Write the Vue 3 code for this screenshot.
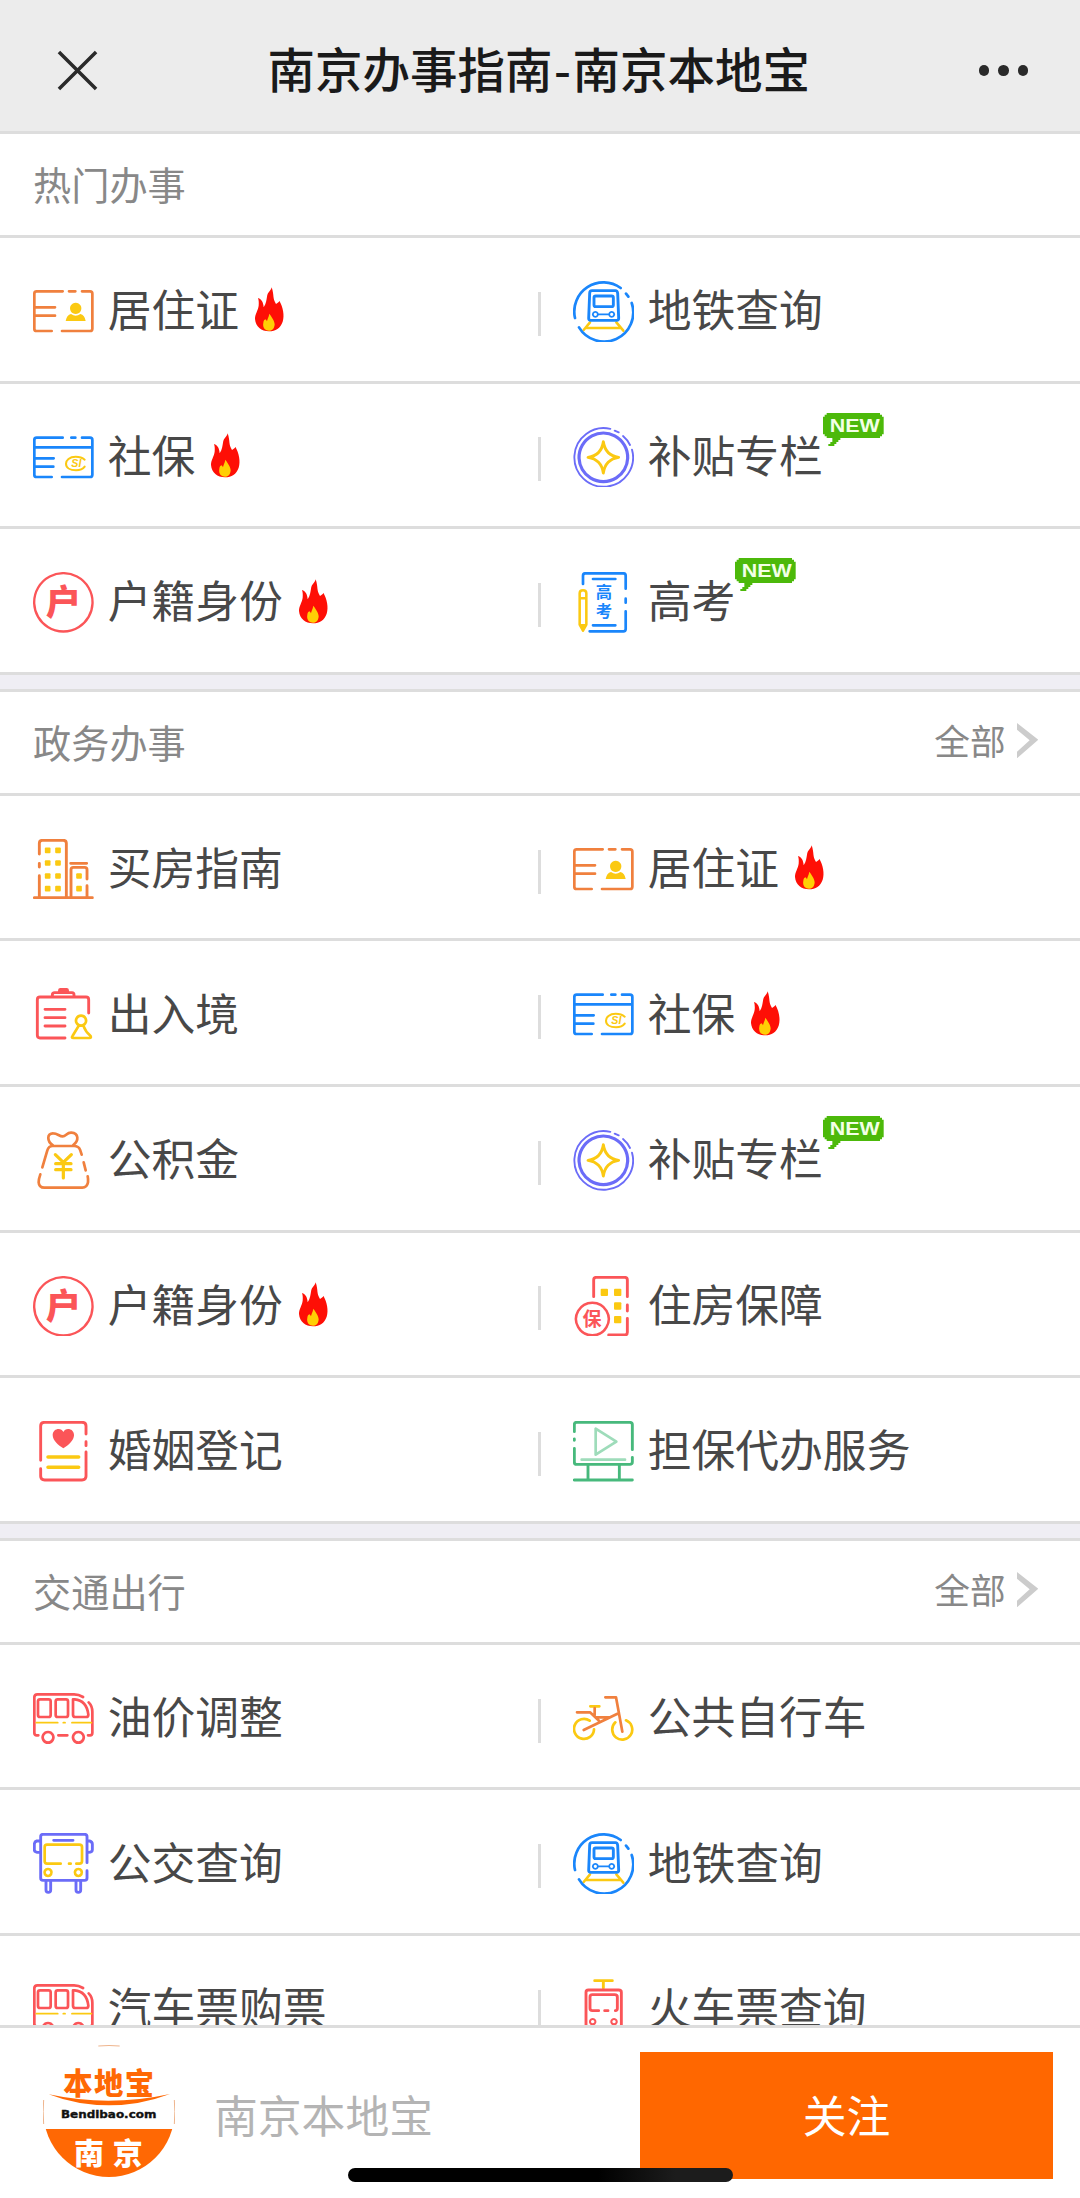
<script setup>
const O = '#f0803e'
const Y = '#fbc912'
const B = '#1a86fb'
const R = '#fb5558'
const P = '#6b6cf8'
const G = '#47b97c'

// Each icon: its own viewBox, stroked paths, filled paths and optional lettering
const icons = {
  permit: {
    box: '99 93 182 182',
    strokes: [
      [O, 7.5, 'M188 124H110Q103 124 103 131V236Q103 243 110 243H155M207 124h19M246 124H270Q277 124 277 131V236Q277 243 270 243H186M107 172H165M107 197H165'],
    ],
    fills: [
      [Y, 'M227 158a17 17 0 1 0 .1 0ZM197 213Q200 195 213 192Q227 202 241 192Q254 195 257 213Z'],
    ],
  },
  social: {
    box: '99 530 182 182',
    strokes: [
      [B, 7.5, 'M188 562H110Q103 562 103 569V673Q103 680 110 680H155M214 562h12M246 562H270Q277 562 277 569V673Q277 680 270 680H186M107 591H277M107 624H161M107 649H160'],
      [Y, 5.5, 'M254 628Q244 619 227 619C208 619 198 630 198 640C198 652 210 660 228 660Q246 660 254 649'],
    ],
    texts: [[Y, 'SI', 229, 650, 32, 'italic 700']],
  },
  hukou: {
    box: '99 966 182 182',
    strokes: [[R, 6.5, 'M190 969.5a87.5 87.5 0 1 0 .1 0Z']],
    texts: [[R, '户', 190, 1096, 106, '900']],
  },
  metro: {
    box: '160 93 182 182',
    strokes: [
      [Y, 7, 'M211 217L192 240M290 217L311 242M200 234H303'],
      [B, 7.5, 'M166 204A87.5 87.5 0 0 1 303 114M319 131L326 140M336 159A87.5 87.5 0 0 1 178 232'],
      [B, 8, 'M217 122H287Q293 122 294 130L297 205Q297 211 291 211H213Q207 211 207 205L210 130Q210 122 217 122ZM228 138H276Q281 138 281 143V165Q281 170 276 170H228Q223 170 223 165V143Q223 138 228 138Z'],
      [B, 5, 'M227 185.500a7.500 7.500 0 1 0 .1 0ZM276 185.500a7.500 7.500 0 1 0 .1 0ZM236 193H267'],
    ],
  },
  subsidy: {
    box: '160 530 182 182',
    strokes: [
      [P, 5, 'M337 598A88 88 0 1 1 272 535.500M285 541L297 546M310 557Q324 569 331 584'],
      [P, 9, 'M251 548a73 73 0 1 0 .1 0Z'],
      [Y, 8, 'M251 574Q257 615 297 621Q257 627 251 668Q245 627 205 621Q245 615 251 574Z'],
    ],
  },
  gaokao: {
    box: '160 966 182 182',
    strokes: [
      [B, 7.5, 'M190 1002V977Q190 970 197 970H311Q318 970 318 977V1016M318 1046V1058M318 1084V1137Q318 1144 311 1144H210M220 987H287M220 1126H287'],
      [Y, 7, 'M180 1030Q180 1021 190 1021Q200 1021 200 1030V1124L190 1142L180 1124ZM180 1045H200'],
    ],
    fills: [[Y, 'M180 1122H200L190 1146Z']],
    texts: [[B, '高', 253, 1043, 49, '700'], [B, '考', 253, 1100, 49, '700']],
  },
  building: {
    box: '99 117 182 182',
    strokes: [
      [O, 8, 'M118 162V130Q118 121 127 121H190Q199 121 199 130V292M118 190V201M118 227V292M103 293H277M212 190H260M213 292V209Q213 202 220 202H254Q261 202 261 209V237M261 257V292'],
    ],
    squares: [Y, 17, [[143, 151], [174, 151], [143, 189], [174, 189], [143, 228], [174, 228], [143, 266], [174, 266], [237, 228], [237, 266]]],
  },
  exit: {
    box: '99 554 182 182',
    strokes: [
      [R, 8, 'M266 641V601Q266 593 258 593H120Q112 593 112 601V708Q112 716 120 716H195M157 592V587Q157 580 164 580H216Q222 580 222 587V592M135 630H195M135 655H195M135 680H195'],
      [Y, 7.5, 'M243 649a15 15 0 1 0 .1 0ZM235 681L218 709Q213 716 220 716H268Q275 716 271 709Q256 696 251 681'],
    ],
    fills: [[R, 'M180 566H201Q207 566 207 574V583H174V574Q174 566 180 566Z']],
  },
  fund: {
    box: '99 991 182 182',
    strokes: [
      [O, 7.5, 'M127 1103L142 1052Q146 1039 158 1039H222Q236 1039 240 1050L245 1065M251 1088L257 1112M263 1130Q265 1140 264 1148Q261 1164 247 1164H133Q117 1164 116 1148Q116 1138 121 1124M159 1037C140 1025 140 1000 160 1001C172 1001 178 1010 188 1010C198 1010 200 998 214 999C236 1001 238 1022 219 1037'],
      [Y, 9, 'M166 1065L190 1088L214 1065M190 1088V1135M167 1092H213M167 1110H213'],
    ],
  },
  housing: {
    box: '100 167 182 182',
    strokes: [
      [R, 8, 'M162 229V179Q162 171 170 171H255Q263 171 263 179V229M263 254V272M263 294V336Q263 344 255 344H207'],
      [R, 7, 'M158 247a49 49 0 1 0 .1 0Z'],
    ],
    squares: [Y, 22, [[194, 216], [234, 216], [234, 257], [234, 298]]],
    texts: [[R, '保', 157, 317, 57, '700']],
  },
  marriage: {
    box: '99 604 182 182',
    strokes: [
      [R, 8, 'M122 722V619Q122 608 134 608H246Q258 608 258 619V643M258 666V678M258 697V770Q258 781 246 781H134Q122 781 122 770V747'],
      [Y, 10, 'M144 712H236M144 743H236'],
    ],
    fills: [[R, 'M190 686C175 676 158 663 158 646C158 626 184 622 190 637C196 622 222 626 222 646C222 663 205 676 190 686Z']],
  },
  agency: {
    box: '100 604 182 182',
    strokes: [
      ['#9edcba', 7.5, 'M168 627V705L230 666ZM126 720H256'],
      [G, 8, 'M104 636V615Q104 608 111 608H270Q278 608 278 615V690M278 713V727Q278 734 270 734H111Q104 734 104 727V686M104 658V662M145 738V778M239 738V778M104 781H278'],
    ],
  },
  coach: {
    box: '99 83 182 182',
    strokes: [
      [R, 7.5, 'M249 110Q236 102 222 102H112Q103 102 103 111V217Q103 225 110 225H115M266 126Q277 137 277 154V217Q277 225 270 225H264M175 225H202M144 215a16 16 0 1 0 .1 0ZM235 215a16 16 0 1 0 .1 0ZM120 117H146Q152 117 152 123V164Q152 170 146 170H120Q114 170 114 164V123Q114 117 120 117ZM173 117H198Q204 117 204 123V164Q204 170 198 170H173Q167 170 167 164V123Q167 117 173 117ZM219 117H224Q260 120 265 163Q265 170 258 170H226Q219 170 219 163Z'],
      [Y, 5, 'M109 187H173M190 187h5M216 187H274'],
    ],
  },
  citybus: {
    box: '99 520 182 182',
    strokes: [
      [P, 8, 'M261 609V531Q261 524 254 524H129Q122 524 122 531V655Q122 662 129 662H254Q261 662 261 655V633M161 542H219M118 544H110Q103 546 103 554V570Q103 578 118 578M265 544H269Q277 546 277 554V570Q277 578 265 578M138 664V691Q138 698 145 698Q152 698 152 691V664M228 664V691Q228 698 235 698Q242 698 242 691V664'],
      [Y, 7.5, 'M182 612H141Q134 612 134 605V562Q134 555 141 555H238Q246 555 246 562V605Q246 612 238 612H229M207 612h5M144 628a10.500 10.500 0 1 0 .1 0ZM235 628a10.500 10.500 0 1 0 .1 0Z'],
    ],
  },
  bike: {
    box: '100 83 182 182',
    strokes: [
      [Y, 7.5, 'M163 207A30 30 0 1 1 150 181M259 180A30 30 0 1 1 227 186M152 138H179'],
      [O, 7.5, 'M112 156H151L178 181M165 143V165M132 209L238 158M168 171H208M197 111H229L248 214'],
    ],
  },
  train: {
    box: '100 957 182 182',
    strokes: [
      [Y, 8, 'M165 962H218M191 962V984'],
      [R, 8, 'M146 990H237Q245 990 245 997V1108Q245 1115 237 1115H146Q139 1115 139 1108V997Q139 990 146 990ZM177 1052H158Q151 1052 151 1045V1011Q151 1004 158 1004H225Q233 1004 233 1011V1045Q233 1052 227 1052M195 1052h10'],
      [R, 5.5, 'M159 1077a8 8 0 1 0 .1 0ZM223 1077a8 8 0 1 0 .1 0Z'],
    ],
  },
}

const sections = [
  {
    title: '热门办事',
    rows: [
      [{ icon: 'permit', text: '居住证', tag: 'hot' }, { icon: 'metro', text: '地铁查询' }],
      [{ icon: 'social', text: '社保', tag: 'hot' }, { icon: 'subsidy', text: '补贴专栏', tag: 'new' }],
      [{ icon: 'hukou', text: '户籍身份', tag: 'hot' }, { icon: 'gaokao', text: '高考', tag: 'new' }],
    ],
  },
  {
    title: '政务办事',
    more: true,
    rows: [
      [{ icon: 'building', text: '买房指南' }, { icon: 'permit', text: '居住证', tag: 'hot' }],
      [{ icon: 'exit', text: '出入境' }, { icon: 'social', text: '社保', tag: 'hot' }],
      [{ icon: 'fund', text: '公积金' }, { icon: 'subsidy', text: '补贴专栏', tag: 'new' }],
      [{ icon: 'hukou', text: '户籍身份', tag: 'hot' }, { icon: 'housing', text: '住房保障' }],
      [{ icon: 'marriage', text: '婚姻登记' }, { icon: 'agency', text: '担保代办服务' }],
    ],
  },
  {
    title: '交通出行',
    more: true,
    rows: [
      [{ icon: 'coach', text: '油价调整' }, { icon: 'bike', text: '公共自行车' }],
      [{ icon: 'citybus', text: '公交查询' }, { icon: 'metro', text: '地铁查询' }],
      [{ icon: 'coach', text: '汽车票购票' }, { icon: 'train', text: '火车票查询' }],
    ],
  },
]
</script>

<template>
  <div class="page">
    <header class="nav">
      <svg class="nav-close" viewBox="0 0 44 44"><path d="M3 3L41 41M41 3L3 41" /></svg>
      <h1 class="nav-title">南京办事指南<span class="dash">-</span>南京本地宝</h1>
      <div class="nav-more"><i></i><i></i><i></i></div>
    </header>

    <main class="list">
      <section v-for="s in sections" :key="s.title" class="section">
        <div class="head">
          <h2 class="head-title">{{ s.title }}</h2>
          <a v-if="s.more" class="more">
            <span>全部</span>
            <svg class="chevron" viewBox="0 0 64 106"><path d="M0 0L64 50L0 106V86L38 52L0 20Z" /></svg>
          </a>
        </div>
        <div v-for="(row, r) in s.rows" :key="r" class="row">
          <div v-for="item in row" :key="item.text" class="cell">
            <svg class="icon" :viewBox="icons[item.icon].box">
              <path
                v-for="(p, i) in icons[item.icon].strokes" :key="'s' + i"
                class="line" :stroke="p[0]" :stroke-width="p[1] + 0.6" :d="p[2]"
              />
              <path v-for="(p, i) in icons[item.icon].fills || []" :key="'f' + i" :fill="p[0]" :d="p[1]" />
              <template v-if="icons[item.icon].squares">
                <rect
                  v-for="(c, i) in icons[item.icon].squares[2]" :key="'q' + i"
                  :fill="icons[item.icon].squares[0]"
                  :x="c[0] - icons[item.icon].squares[1] / 2"
                  :y="c[1] - icons[item.icon].squares[1] / 2"
                  :width="icons[item.icon].squares[1]"
                  :height="icons[item.icon].squares[1]"
                  rx="3"
                />
              </template>
              <text
                v-for="(t, i) in icons[item.icon].texts || []" :key="'t' + i"
                class="glyph" :class="{ slanted: t[5].startsWith('italic') }"
                :fill="t[0]" :x="t[2]" :y="t[3]" :font-size="t[4]"
                :font-weight="t[5].replace('italic ', '')"
              >{{ t[1] }}</text>
            </svg>
            <span class="label">{{ item.text }}</span>
            <svg v-if="item.tag === 'hot'" class="hot" viewBox="760 106 96 140">
              <path fill="#fe0f06" d="M816 110C824 135 818 142 829 160C836 154 838 155 839 150C850 168 855 195 849 213C842 233 828 242 808 242C785 242 768 228 766 205C766 190 775 180 777 165C778 155 777 148 775 142C786 146 791 155 792 170C800 158 800 148 802 138C804 124 814 120 816 110Z" />
              <path fill="#ffcf05" d="M809 189C820 205 825 212 825 222C823 236 816 240 808 240C797 240 788 232 791 216C792 209 794 208 797 206C800 208 801 210 802 212C803 205 807 200 809 189Z" />
            </svg>
            <svg v-if="item.tag === 'new'" class="new" viewBox="910 489 182 99">
              <path fill="#4cb90a" d="M921 489H1081V494H1087V500H1092V553H1087V559H1081V564H962V570H956V576H950V582H944V588H926V582H932V576H938V564H921V559H915V553H910V500H915V494H921Z" />
              <text class="new-text" x="930" y="546" textLength="150" lengthAdjust="spacingAndGlyphs">NEW</text>
            </svg>
          </div>
        </div>
      </section>
    </main>

    <footer class="bar">
      <svg class="logo" viewBox="129 103 396 398">
        <defs><clipPath id="disc"><circle cx="327" cy="302" r="197" /></clipPath></defs>
        <path fill="none" stroke="#eeb48c" stroke-width="3" d="M131 340Q128 302 131 268M523 340Q526 302 523 268M295 106Q327 103 359 106" />
        <rect x="129" y="355" width="396" height="146" fill="#ff6804" clip-path="url(#disc)" />
        <path fill="#ff6804" d="M146 251Q327 290 510 250Q420 284 327 284Q230 284 146 251Z" />
        <text class="logo-cn" fill="#ff6804" x="328" y="249" font-size="88" letter-spacing="4">本地宝</text>
        <text class="logo-en" x="183" y="321" textLength="286" lengthAdjust="spacingAndGlyphs">Bendibao.com</text>
        <text class="logo-cn" fill="#fff" x="267" y="461" font-size="90">南</text>
        <text class="logo-cn" fill="#fff" x="383" y="461" font-size="90">京</text>
      </svg>
      <span class="account">南京本地宝</span>
      <button class="follow">关注</button>
    </footer>
    <div class="home-indicator"></div>
  </div>
</template>

<style>
body {
  margin: 0;
  background: #fff;
}
</style>

<style scoped>
.page {
  position: relative;
  display: flex;
  flex-direction: column;
  width: 1080px;
  height: 2198px;
  overflow: hidden;
  background: #fff;
  font-family: "Noto Sans CJK SC", "Noto Sans", sans-serif;
}
.nav {
  flex: none;
  display: flex;
  align-items: center;
  justify-content: space-between;
  box-sizing: border-box;
  height: 131px;
  padding: 10px 52px 0 56px;
  background: #ececec;
}
.nav-close {
  width: 43px;
  height: 43px;
}
.nav-close path {
  stroke: #2a2a2a;
  stroke-width: 3.6;
  fill: none;
}
.nav-title {
  margin: 0 0 6px;
  font-size: 47.5px;
  font-weight: 500;
  line-height: 64px;
  color: #1a1a1a;
}
.dash {
  padding: 0 1.5px;
}
.nav-more {
  display: flex;
  gap: 9px;
}
.nav-more i {
  width: 10.500px;
  height: 10.500px;
  border-radius: 50%;
  background: #2a2a2a;
}
.list {
  flex: 1;
  min-height: 0;
  overflow: hidden;
  background: #efeef4;
}
.section {
  border-top: 3px solid #ddd;
  background: #fff;
}
.section + .section {
  margin-top: 14px;
}
.head {
  display: flex;
  align-items: center;
  justify-content: space-between;
  box-sizing: border-box;
  height: 104px;
  padding: 0 42px 0 33px;
  border-bottom: 3px solid #ddd;
  color: #888;
}
.head-title {
  margin: 0 0 1px;
  font-size: 38.200px;
  font-weight: 400;
  line-height: 54px;
}
.more {
  display: flex;
  align-items: center;
  gap: 11px;
  padding-bottom: 4px;
  font-size: 35.700px;
  line-height: 50px;
}
.chevron {
  width: 21.300px;
  height: 35.300px;
  fill: #ccc;
}
.row {
  display: flex;
  box-sizing: border-box;
  height: 145.600px;
  border-bottom: 3px solid #ddd;
}
.cell {
  display: flex;
  align-items: center;
  box-sizing: border-box;
  width: 540px;
  padding: 4px 0 0 33px;
}
.cell + .cell::before {
  content: "";
  width: 3px;
  height: 44px;
  margin: 5px 32px 0 -35px;
  background: #ddd;
}
.icon {
  flex: none;
  width: 60.700px;
  height: 60.700px;
}
.line {
  fill: none;
  stroke-linecap: round;
  stroke-linejoin: round;
}
.glyph {
  text-anchor: middle;
}
.slanted {
  font-family: "Liberation Sans", sans-serif;
  font-style: italic;
}
.label {
  margin: 0 0 6px 14px;
  font-size: 43.800px;
  line-height: 60px;
  color: #484848;
  white-space: nowrap;
}
.hot {
  width: 32px;
  height: 46.700px;
  margin: 0 0 3px 14px;
}
.new {
  align-self: flex-start;
  width: 60.700px;
  height: 33px;
  margin-top: 25px;
}
.new-text {
  fill: #f2ffe6;
  font: 700 54px "Liberation Sans", sans-serif;
}
.bar {
  flex: none;
  display: flex;
  align-items: center;
  box-sizing: border-box;
  height: 173px;
  padding: 5px 27px 0 43px;
  border-top: 3px solid #ddd;
  background: #fff;
}
.logo {
  width: 132px;
  height: 132.700px;
  margin-bottom: 8px;
}
.logo-cn {
  font-weight: 900;
  text-anchor: middle;
}
.logo-en {
  fill: #111;
  stroke: #111;
  stroke-width: 1.2;
  font: 700 34px "DejaVu Sans", sans-serif;
}
.account {
  flex: 1;
  margin-left: 39px;
  padding-bottom: 4px;
  font-size: 43.800px;
  line-height: 60px;
  color: #b4b4b4;
}
.follow {
  width: 413px;
  height: 127px;
  margin: 0 0 1px;
  padding: 0 0 2px;
  border: 0;
  background: #ff6700;
  color: #fff;
  font: 400 43.800px "Noto Sans CJK SC", sans-serif;
}
.home-indicator {
  position: absolute;
  left: 348px;
  bottom: 16px;
  width: 385px;
  height: 14px;
  border-radius: 7px;
  background: linear-gradient(90deg, #000 65%, #1c1c1c 85%);
}
</style>
